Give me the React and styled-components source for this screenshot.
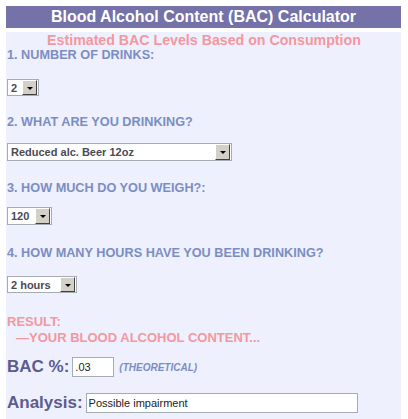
import styled, { createGlobalStyle } from "styled-components"

const GlobalStyle = createGlobalStyle`
    body {
        margin: 0;
        background: #ffffff;
        font-family: "Liberation Sans", Arial, sans-serif;
    }
`

const Page = styled.div`
    padding: 6px 7px 0 6px;
    width: 395px;
`

const Header = styled.div`
    background-color: #7571a9;
    color: #ffffff;
    font-weight: 700;
    font-size: 16px;
    line-height: 22px;
    height: 22px;
    text-align: center;
`

const Panel = styled.div`
    margin-top: 4px;
    background-color: #eef0fe;
    padding: 1px 0 20px 1px;
    min-height: 390px;
`

const Subtitle = styled.div`
    color: #f4979e;
    font-weight: 700;
    font-size: 14.2px;
    line-height: 15px;
    text-align: center;
`

const Label = styled.div`
    color: #7b8ec2;
    font-weight: 700;
    font-size: 12.7px;
    line-height: 15px;
    text-transform: uppercase;
    margin-top: ${p => p.$top || 0}px;
`

const SelectBox = styled.div`
    display: flex;
    align-items: stretch;
    width: ${p => p.$width}px;
    height: ${p => p.$height || 17}px;
    box-sizing: border-box;
    border: 1px solid #a5acb2;
    background: #ffffff;
    margin-top: ${p => p.$top || 0}px;
`

const SelectValue = styled.span`
    flex: 1;
    font-size: 11px;
    font-weight: 700;
    color: #4a4a55;
    display: flex;
    align-items: center;
    padding-left: 3px;
    white-space: nowrap;
    overflow: hidden;
`

const SelectButton = styled.span`
    width: 15px;
    margin: 0 1px 0 0;
    box-sizing: border-box;
    background: #d4d0c8;
    border: 1px solid;
    border-color: #ffffff #404040 #404040 #ffffff;
    display: flex;
    align-items: center;
    justify-content: center;

    &::after {
        content: "";
        border-left: 3px solid transparent;
        border-right: 3px solid transparent;
        border-top: 3px solid #000000;
        margin-top: 1px;
    }
`

const Result = styled.div`
    color: #f4979e;
    font-weight: 700;
    font-size: 13px;
    line-height: 16px;
    margin-top: 21px;
`

const ResultLine = styled.div`
    padding-left: 9px;
`

const FieldRow = styled.div`
    display: flex;
    align-items: center;
    height: 20px;
    margin-top: ${p => p.$top || 0}px;
`

const BigLabel = styled.span`
    color: #5b5c8f;
    font-weight: 700;
    font-size: 17px;
    line-height: 20px;
    margin-right: 3px;
`

const TextBox = styled.div`
    width: ${p => p.$width}px;
    height: 20px;
    box-sizing: border-box;
    border: 1px solid #a5acb2;
    background: #ffffff;
    font-size: 11px;
    color: #222222;
    line-height: 18px;
    padding-left: 2px;
`

const Note = styled.span`
    color: #7b8ec2;
    font-size: 10px;
    font-weight: 700;
    font-style: italic;
    margin-left: 5px;
`

const Select = ({ value, width, top, height }) => (
    <SelectBox $width={width} $top={top} $height={height}>
        <SelectValue>{value}</SelectValue>
        <SelectButton />
    </SelectBox>
)

const App = () => {
    return (
        <Page>
            <GlobalStyle />
            <Header>Blood Alcohol Content (BAC) Calculator</Header>
            <Panel>
                <Subtitle>Estimated BAC Levels Based on Consumption</Subtitle>
                <Label>1. Number of drinks:</Label>
                <Select value="2" width={32} top={16} />
                <Label $top={19}>2. What are you drinking?</Label>
                <Select value="Reduced alc. Beer 12oz" width={225} top={13} height={18} />
                <Label $top={20}>3. How much do you weigh?:</Label>
                <Select value="120" width={45} top={11} height={18} />
                <Label $top={21}>4. How many hours have you been drinking?</Label>
                <Select value="2 hours" width={70} top={15} />
                <Result>
                    RESULT:
                    <ResultLine>—YOUR BLOOD ALCOHOL CONTENT...</ResultLine>
                </Result>
                <FieldRow $top={11}>
                    <BigLabel>BAC %:</BigLabel>
                    <TextBox $width={42}>.03</TextBox>
                    <Note>(THEORETICAL)</Note>
                </FieldRow>
                <FieldRow $top={16}>
                    <BigLabel>Analysis:</BigLabel>
                    <TextBox $width={272}>Possible impairment</TextBox>
                </FieldRow>
            </Panel>
        </Page>
    )
}

export default App
